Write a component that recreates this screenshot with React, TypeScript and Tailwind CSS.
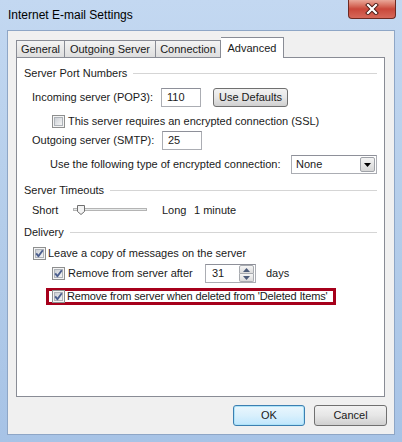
import React from 'react'

function CheckBox({ checked }: { checked?: boolean }) {
  return (
    <svg width="13" height="13" viewBox="0 0 13 13" className="shrink-0">
      <defs>
        <linearGradient id="cbIn" x1="0" y1="0" x2="1" y2="1">
          <stop offset="0" stopColor="#c9cdd3" />
          <stop offset="1" stopColor="#f7f7f7" />
        </linearGradient>
      </defs>
      <rect x="0.5" y="0.5" width="12" height="12" fill="#f4f4f4" stroke="#8e8f8f" />
      <rect x="2.5" y="2.5" width="8" height="8" fill="url(#cbIn)" stroke="#aeb3b9" />
      {checked && (
        <path d="M3.2 6.4 L5.4 9.2 L9.8 3.2" fill="none" stroke="#4b5e8e" strokeWidth="1.9" strokeLinejoin="round" />
      )}
    </svg>
  )
}

function GroupHeader({ title }: { title: string }) {
  return (
    <div className="flex items-center h-[16px] gap-[6px]">
      <span>{title}</span>
      <div className="flex-1 h-px bg-[#d5d5d5]" />
    </div>
  )
}

function TextBox({ value, width }: { value: string; width: string }) {
  return (
    <div className={`${width} shrink-0 h-[19px] bg-white border border-[#abadb3] border-t-[#8e9099] flex items-center pl-[5px]`}>
      {value}
    </div>
  )
}

export default function App() {
  return (
    <div className="w-[402px] h-[442px] flex flex-col bg-gradient-to-b from-[#c3d8f1] via-[#b4cdea] to-[#a7c3e6] font-['Liberation_Sans',Arial,sans-serif] text-[11px] text-[#1a1a1a] leading-none whitespace-nowrap overflow-hidden">
      {/* title bar */}
      <div className="h-[30px] flex items-start shrink-0">
        <span className="ml-[8px] mt-[9px] text-[12px] text-black">Internet E-mail Settings</span>
        <div className="ml-auto mr-[6px] w-[48px] h-[19px] rounded-b-[4px] border border-t-0 border-[#6d2a22] bg-gradient-to-b from-[#e9a799] via-[#c9473a] to-[#d6685a] flex items-center justify-center">
          <svg width="14" height="12" viewBox="0 0 14 12">
            <path d="M3 2 L11 10 M11 2 L3 10" stroke="#4a1a14" strokeWidth="4" strokeLinecap="square" />
            <path d="M3 2 L11 10 M11 2 L3 10" stroke="#ffffff" strokeWidth="2.2" strokeLinecap="square" />
          </svg>
        </div>
      </div>

      {/* client area */}
      <div className="mx-[7px] h-[405px] shrink-0 bg-[#f0f0f0] border border-[#8ea6c6] pl-[8px] pr-[7px] pt-[6px] flex flex-col">
        {/* tabs */}
        <div className="flex items-end h-[20px]">
          <div className="w-[49px] h-[17px] border border-b-0 border-[#898c95] bg-gradient-to-b from-[#f3f3f3] to-[#dedede] flex items-center justify-center">General</div>
          <div className="w-[91px] h-[17px] border border-b-0 border-l-0 border-[#898c95] bg-gradient-to-b from-[#f3f3f3] to-[#dedede] flex items-center justify-center">Outgoing Server</div>
          <div className="w-[65px] h-[17px] border border-b-0 border-l-0 border-[#898c95] bg-gradient-to-b from-[#f3f3f3] to-[#dedede] flex items-center justify-center">Connection</div>
          <div className="relative z-10 -mb-px w-[63px] h-[21px] border border-b-0 border-l-0 border-[#898c95] bg-white flex items-start justify-center pt-[5px]">Advanced</div>
        </div>

        {/* tab panel */}
        <div className="w-[369px] h-[340px] border border-[#898c95] bg-white px-[7px] pt-[7px] flex flex-col">
          <GroupHeader title="Server Port Numbers" />

          <div className="mt-[7px] h-[19px] flex items-center ml-[8px]">
            <span className="w-[129px] shrink-0">Incoming server (POP3):</span>
            <TextBox value="110" width="w-[40px]" />
            <div className="ml-[12px] w-[75px] h-[19px] rounded-[3px] border border-[#707070] bg-gradient-to-b from-[#f2f2f2] via-[#e6e6e6] to-[#d0d0d0] flex items-center justify-center">Use Defaults</div>
          </div>

          <div className="mt-[7px] h-[14px] flex items-center ml-[28px] gap-[3px]">
            <CheckBox />
            <span>This server requires an encrypted connection (SSL)</span>
          </div>

          <div className="mt-[3px] h-[19px] flex items-center ml-[8px]">
            <span className="w-[130px] shrink-0">Outgoing server (SMTP):</span>
            <TextBox value="25" width="w-[40px]" />
          </div>

          <div className="mt-[5px] h-[19px] flex items-center ml-[26px]">
            <span className="w-[241px] shrink-0">Use the following type of encrypted connection:</span>
            <div className="w-[86px] h-[19px] bg-white border border-[#abadb3] border-t-[#8e9099] flex items-center pl-[4px]">
              <span className="flex-1">None</span>
              <div className="mr-px w-[15px] h-[15px] border border-[#9fa2a8] rounded-[2px] bg-gradient-to-b from-[#f4f4f4] to-[#d6d6d6] flex items-center justify-center">
                <svg width="7" height="4" viewBox="0 0 7 4">
                  <path d="M0 0 L7 0 L3.5 4 Z" fill="#000" />
                </svg>
              </div>
            </div>
          </div>

          <div className="mt-[8px]">
            <GroupHeader title="Server Timeouts" />
          </div>

          <div className="mt-[4px] h-[16px] flex items-center ml-[8px]">
            <span className="w-[41px]">Short</span>
            <svg width="74" height="12" viewBox="0 0 74 12">
              <rect x="0.5" y="4.5" width="73" height="2" fill="#e7eaea" stroke="#b4b4b4" />
              <path d="M4.5 1.5 L11.5 1.5 L11.5 7.5 L8 10.5 L4.5 7.5 Z" fill="#f3f3f3" stroke="#6f6f6f" />
            </svg>
            <span className="ml-[15px] w-[32px]">Long</span>
            <span>1 minute</span>
          </div>

          <div className="mt-[6px]">
            <GroupHeader title="Delivery" />
          </div>

          <div className="mt-[6px] h-[14px] flex items-center ml-[9px] gap-[2px]">
            <CheckBox checked />
            <span>Leave a copy of messages on the server</span>
          </div>

          <div className="mt-[4px] h-[19px] flex items-center ml-[28px]">
            <div className="w-[153px] shrink-0 flex items-center gap-[3px]">
              <CheckBox checked />
              <span>Remove from server after</span>
            </div>
            <div className="w-[51px] h-[19px] bg-white border border-[#abadb3] border-t-[#8e9099] flex items-center pl-[6px]">
              <span className="flex-1">31</span>
              <div className="mr-px w-[15px] h-[17px] flex flex-col">
                <div className="flex-1 border border-[#a8abb0] rounded-t-[2px] bg-gradient-to-b from-[#f5f5f5] to-[#dcdcdc] flex items-center justify-center">
                  <svg width="7" height="4" viewBox="0 0 7 4"><path d="M0 4 L7 4 L3.5 0 Z" fill="#4d5c7a" /></svg>
                </div>
                <div className="flex-1 border border-t-0 border-[#a8abb0] rounded-b-[2px] bg-gradient-to-b from-[#f5f5f5] to-[#dcdcdc] flex items-center justify-center">
                  <svg width="7" height="4" viewBox="0 0 7 4"><path d="M0 0 L7 0 L3.5 4 Z" fill="#4d5c7a" /></svg>
                </div>
              </div>
            </div>
            <span className="ml-[10px]">days</span>
          </div>

          <div className="mt-[5px] ml-[22px] w-[290px] h-[17px] border-[3px] border-[#a6001b] flex items-center pl-[3px] gap-[2px]">
            <CheckBox checked />
            <span className="tracking-[-0.15px]">Remove from server when deleted from 'Deleted Items'</span>
          </div>
        </div>

        {/* buttons */}
        <div className="mt-[8px] flex justify-end gap-[9px]">
          <div className="w-[72px] h-[21px] rounded-[3px] border border-[#3c7fb1] bg-gradient-to-b from-[#eaf6fd] via-[#d9f0fc] to-[#bee6fd] shadow-[inset_0_0_0_1px_#aee3f8] flex items-center justify-center">OK</div>
          <div className="w-[73px] h-[21px] rounded-[3px] border border-[#707070] bg-gradient-to-b from-[#f2f2f2] via-[#e6e6e6] to-[#d0d0d0] flex items-center justify-center">Cancel</div>
        </div>
      </div>
      <div className="flex-1" />
    </div>
  )
}
